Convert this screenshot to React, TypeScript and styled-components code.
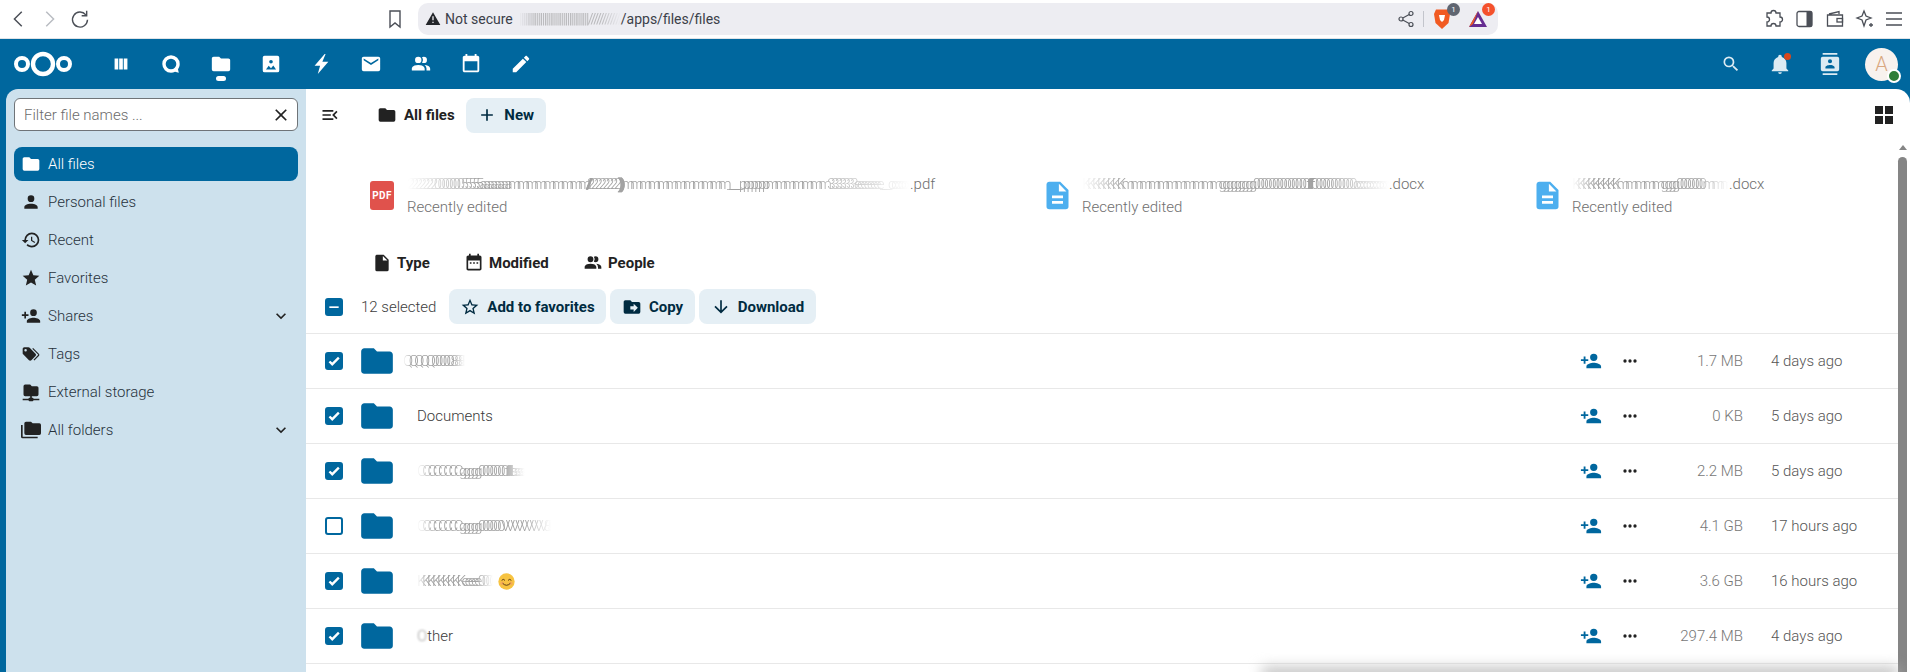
import React from 'react';
import styled, { createGlobalStyle } from 'styled-components';

const GlobalStyle = createGlobalStyle`
  html, body {
    margin: 0;
    padding: 0;
    height: 100%;
    overflow: hidden;
    background: #fff;
    font-family: Roboto, "Liberation Sans", sans-serif;
  }
  * {
    box-sizing: border-box;
  }
`;

const mdi = {
  folder: 'M10,4H4C2.89,4 2,4.89 2,6V18A2,2 0 0,0 4,20H20A2,2 0 0,0 22,18V8C22,6.89 21.1,6 20,6H12L10,4Z',
  account: 'M12,4A4,4 0 0,1 16,8A4,4 0 0,1 12,12A4,4 0 0,1 8,8A4,4 0 0,1 12,4M12,14C16.42,14 20,15.79 20,18V20H4V18C4,15.79 7.58,14 12,14Z',
  history: 'M13.5,8H12V13L16.28,15.54L17,14.33L13.5,12.25V8M13,3A9,9 0 0,0 4,12H1L4.96,16.03L9,12H6A7,7 0 0,1 13,5A7,7 0 0,1 20,12A7,7 0 0,1 13,19C11.07,19 9.32,18.21 8.06,16.94L6.64,18.36C8.27,20 10.5,21 13,21A9,9 0 0,0 22,12A9,9 0 0,0 13,3',
  star: 'M12,17.27L18.18,21L16.54,13.97L22,9.24L14.81,8.62L12,2L9.19,8.62L2,9.24L7.45,13.97L5.82,21L12,17.27Z',
  starOutline: 'M12,15.39L8.24,17.66L9.23,13.38L5.91,10.5L10.29,10.13L12,6.09L13.71,10.13L18.09,10.5L14.77,13.38L15.76,17.66M22,9.24L14.81,8.62L12,2L9.19,8.62L2,9.24L7.45,13.97L5.82,21L12,17.27L18.18,21L16.54,13.97L22,9.24Z',
  accountPlus: 'M15,14C12.33,14 7,15.33 7,18V20H23V18C23,15.33 17.67,14 15,14M6,10V7H4V10H1V12H4V15H6V12H9V10M15,12A4,4 0 0,0 19,8A4,4 0 0,0 15,4A4,4 0 0,0 11,8A4,4 0 0,0 15,12Z',
  tags: 'M5.5,9A1.5,1.5 0 0,0 7,7.5A1.5,1.5 0 0,0 5.5,6A1.5,1.5 0 0,0 4,7.5A1.5,1.5 0 0,0 5.5,9M17.41,11.58C17.77,11.94 18,12.44 18,13C18,13.55 17.78,14.05 17.41,14.41L12.41,19.41C12.05,19.77 11.55,20 11,20C10.45,20 9.95,19.78 9.58,19.41L2.59,12.42C2.22,12.05 2,11.55 2,11V6C2,4.89 2.89,4 4,4H9C9.55,4 10.05,4.22 10.41,4.58L17.41,11.58M13.54,5.71L14.54,4.71L21.41,11.58C21.78,11.94 22,12.45 22,13C22,13.55 21.78,14.05 21.42,14.41L16.04,19.79L15.04,18.79L20.75,13L13.54,5.71Z',
  folderNetwork: 'M3,15V5A2,2 0 0,1 5,3H11L13,5H19A2,2 0 0,1 21,7V15A2,2 0 0,1 19,17H13V19H14A1,1 0 0,1 15,20H22V22H15A1,1 0 0,1 14,23H10A1,1 0 0,1 9,22H2V20H9A1,1 0 0,1 10,19H11V17H5A2,2 0 0,1 3,15Z',
  folderMultiple: 'M22,4H14L12,2H6A2,2 0 0,0 4,4V16A2,2 0 0,0 6,18H22A2,2 0 0,0 24,16V6A2,2 0 0,0 22,4M2,6H0V20A2,2 0 0,0 2,22H20V20H2V6Z',
  chevronDown: 'M7.41,8.58L12,13.17L16.59,8.58L18,10L12,16L6,10L7.41,8.58Z',
  close: 'M19,6.41L17.59,5L12,10.59L6.41,5L5,6.41L10.59,12L5,17.59L6.41,19L12,13.41L17.59,19L19,17.59L13.41,12L19,6.41Z',
  plus: 'M19,13H13V19H11V13H5V11H11V5H13V11H19V13Z',
  menuOpen: 'M21,15.61L19.59,17L14.58,12L19.59,7L21,8.39L17.44,12L21,15.61M3,6H16V8H3V6M3,13V11H13V13H3M3,18V16H16V18H3Z',
  grid: 'M3,11H11V3H3M3,21H11V13H3M13,21H21V13H13M13,3V11H21V3',
  file: 'M13,9V3.5L18.5,9M6,2C4.89,2 4,2.89 4,4V20A2,2 0 0,0 6,22H18A2,2 0 0,0 20,20V8L14,2H6Z',
  calendarDots: 'M7,11H9V13H7V11M11,11H13V13H11V11M15,11H17V13H15V11M21,5V19C21,20.11 20.11,21 19,21H5C3.89,21 3,20.1 3,19V5C3,3.9 3.9,3 5,3H6V1H8V3H16V1H18V3H19C20.11,3 21,3.9 21,5M19,19V9H5V19H19Z',
  calendar: 'M21,5V19C21,20.11 20.11,21 19,21H5C3.89,21 3,20.1 3,19V5C3,3.9 3.9,3 5,3H6V1H8V3H16V1H18V3H19C20.11,3 21,3.9 21,5M19,19V9H5V19H19Z',
  accountMultiple: 'M16,17V19H2V17S2,13 9,13 16,17 16,17M12.5,7.5A3.5,3.5 0 1,0 9,11A3.5,3.5 0 0,0 12.5,7.5M15.94,13A5.32,5.32 0 0,1 18,17V19H22V17S22,13.37 15.94,13M15,4A3.39,3.39 0 0,0 13.07,4.59A5,5 0 0,1 13.07,10.41A3.39,3.39 0 0,0 15,11A3.5,3.5 0 0,0 15,4Z',
  folderMove: 'M14,18V15H10V11H14V8L19,13M20,6H12L10,4H4C2.89,4 2,4.89 2,6V18A2,2 0 0,0 4,20H20A2,2 0 0,0 22,18V8C22,6.89 21.1,6 20,6Z',
  arrowDown: 'M11,4H13V16L18.5,10.5L19.92,11.92L12,19.84L4.08,11.92L5.5,10.5L11,16V4Z',
  dots: 'M16,12A2,2 0 0,1 18,10A2,2 0 0,1 20,12A2,2 0 0,1 18,14A2,2 0 0,1 16,12M10,12A2,2 0 0,1 12,10A2,2 0 0,1 14,12A2,2 0 0,1 12,14A2,2 0 0,1 10,12M4,12A2,2 0 0,1 6,10A2,2 0 0,1 8,12A2,2 0 0,1 6,14A2,2 0 0,1 4,12Z',
  magnify: 'M9.5,3A6.5,6.5 0 0,1 16,9.5C16,11.11 15.41,12.59 14.44,13.73L14.71,14H15.5L20.5,19L19,20.5L14,15.5V14.71L13.73,14.44C12.59,15.41 11.11,16 9.5,16A6.5,6.5 0 0,1 3,9.5A6.5,6.5 0 0,1 9.5,3M9.5,5C7,5 5,7 5,9.5C5,12 7,14 9.5,14C12,14 14,12 14,9.5C14,7 12,5 9.5,5Z',
  bell: 'M21,19V20H3V19L5,17V11C5,7.9 7.03,5.17 10,4.29C10,4.19 10,4.1 10,4A2,2 0 0,1 12,2A2,2 0 0,1 14,4C14,4.1 14,4.19 14,4.29C16.97,5.17 19,7.9 19,11V17L21,19M14,21A2,2 0 0,1 12,23A2,2 0 0,1 10,21',
  contacts: 'M20,0H4V2H20V0M4,24H20V22H4V24M20,4H4A2,2 0 0,0 2,6V18A2,2 0 0,0 4,20H20A2,2 0 0,0 22,18V6A2,2 0 0,0 20,4M12,6.75A2.25,2.25 0 0,1 14.25,9A2.25,2.25 0 0,1 12,11.25A2.25,2.25 0 0,1 9.75,9A2.25,2.25 0 0,1 12,6.75M17,17H7V15.5C7,13.83 10.33,13 12,13C13.67,13 17,13.83 17,15.5V17Z',
  bolt: 'M16,1 L5,14 H11 L8.5,23 L20,9.5 H13.5 L17,1 Z',
  email: 'M20,8L12,13L4,8V6L12,11L20,6M20,4H4C2.89,4 2,4.89 2,6V18A2,2 0 0,0 4,20H20A2,2 0 0,0 22,18V6C22,4.89 21.1,4 20,4Z',
  pencil: 'M20.71,7.04C21.1,6.65 21.1,6 20.71,5.63L18.37,3.29C18,2.9 17.35,2.9 16.96,3.29L15.12,5.12L18.87,8.87M3,17.25V21H6.75L17.81,9.93L14.06,6.18L3,17.25Z',
  image: 'M5,3H19A2,2 0 0,1 21,5V19A2,2 0 0,1 19,21H5A2,2 0 0,1 3,19V5A2,2 0 0,1 5,3M12,7.5A2,2 0 1,0 12,11.5A2,2 0 1,0 12,7.5M6.5,18H17.5L14.5,13.5L12,16.5L9.5,14L6.5,18Z',
  apps: 'M5,6H9V18H5V6M10,6H14V18H10V6M15,6H19V18H15V6Z',
  talk: 'M12,2.5A9.5,9.5 0 0,0 12,21.5C13.6,21.5 15.1,21.1 16.4,20.4L20.5,21.5L19.6,17.6C20.8,16 21.5,14.1 21.5,12A9.5,9.5 0 0,0 12,2.5M12,6.2A5.8,5.8 0 1,1 12,17.8A5.8,5.8 0 1,1 12,6.2Z',
  alert: 'M13,14H11V8H13M13,18H11V16H13M1,21H23L12,2L1,21Z',
  docFile: 'M6,2C4.9,2 4,2.9 4,4V20A2,2 0 0,0 6,22H18A2,2 0 0,0 20,20V8L14,2H6M13,3.5L18.5,9H13V3.5M8,12H16V14H8V12M8,16H16V18H8V16Z',
};

const Glyph = styled.svg<{ $size?: number; $color?: string }>`
  display: block;
  flex: none;
  width: ${p => p.$size ?? 20}px;
  height: ${p => p.$size ?? 20}px;
  fill: ${p => p.$color ?? '#222'};
`;

const Icon = ({ d, size, color }: { d: string; size?: number; color?: string }) => (
  <Glyph viewBox="0 0 24 24" $size={size} $color={color}>
    <path d={d} />
  </Glyph>
);

const Page = styled.div`
  width: 1910px;
  height: 672px;
  display: flex;
  flex-direction: column;
  overflow: hidden;
  background: #00679e;
  position: relative;
`;

/* browser chrome */
const BrowserBar = styled.div`
  height: 39px;
  flex: none;
  display: flex;
  align-items: center;
  background: #fff;
  border-bottom: 1px solid #dfe3e8;
  padding-bottom: 1px;
`;

const ChromeButton = styled.div<{ $w: number; $gap?: number }>`
  width: ${p => p.$w}px;
  margin-left: ${p => p.$gap ?? 0}px;
  flex: none;
  display: flex;
  justify-content: center;
  align-items: center;
`;

const NavButtons = styled.div`
  width: 418px;
  flex: none;
  display: flex;
  padding-left: 4px;
`;

const AddressBar = styled.div`
  width: 1080px;
  height: 32px;
  flex: none;
  display: flex;
  align-items: center;
  border-radius: 10px;
  background: #ededf2;
  padding: 0 0 0 7px;
  font-size: 14px;
  color: #3b4049;
`;

const AddressText = styled.span`
  margin-left: 4px;
`;

const Smear = styled.span<{ $w: number; $color?: string }>`
  display: inline-block;
  width: ${p => p.$w}px;
  overflow: hidden;
  white-space: nowrap;
  letter-spacing: -4.5px;
  color: ${p => p.$color ?? '#555'};
  filter: blur(0.7px);
  opacity: 0.55;
  flex: none;
  mask-image: linear-gradient(90deg, transparent, #000 14%, #000 80%, transparent);
`;

const AddressSmear = styled(Smear)`
  margin-left: 6px;
  letter-spacing: -1.5px;
  opacity: 0.5;
`;

const AddressRight = styled.div`
  margin-left: auto;
  display: flex;
  align-items: center;
`;

const Divider = styled.div`
  width: 1px;
  height: 16px;
  background: #c3c5cc;
  margin: 0 9px 0 8px;
`;

const Counter = styled.span<{ $bg: string }>`
  position: absolute;
  top: -5px;
  right: -7px;
  width: 13px;
  height: 13px;
  border-radius: 50%;
  background: ${p => p.$bg};
  color: #fff;
  font-size: 8px;
  line-height: 13px;
  text-align: center;
`;

const Badge = styled.div<{ $gap?: number; $end?: number }>`
  position: relative;
  width: 20px;
  height: 22px;
  margin-left: ${p => p.$gap ?? 0}px;
  margin-right: ${p => p.$end ?? 0}px;
`;

const ToolIcons = styled.div`
  display: flex;
  margin-left: 260px;
  width: 150px;
`;

/* nextcloud header */
const Header = styled.header`
  height: 50px;
  flex: none;
  display: flex;
  align-items: center;
  background: #00679e;
`;

const Logo = styled.svg`
  width: 62px;
  height: 30px;
  margin-left: 12px;
  margin-right: 22px;
  flex: none;
`;

const AppItem = styled.div`
  width: 50px;
  height: 50px;
  flex: none;
  display: flex;
  align-items: center;
  justify-content: center;
  position: relative;
`;

const ActiveDot = styled.span`
  position: absolute;
  bottom: 8px;
  left: 50%;
  width: 10px;
  height: 5px;
  margin-left: -5px;
  border-radius: 3px;
  background: #fff;
`;

const HeaderRight = styled.div`
  margin-left: auto;
  display: flex;
  align-items: center;
  padding-right: 12px;
`;

const HeaderAction = styled.div<{ $w?: number }>`
  width: ${p => p.$w ?? 50}px;
  display: flex;
  justify-content: center;
  position: relative;
`;

const NotifyDot = styled.span`
  position: absolute;
  top: 0;
  left: 29px;
  width: 7px;
  height: 7px;
  border-radius: 50%;
  background: #d9481c;
`;

const Avatar = styled.div`
  width: 33px;
  height: 33px;
  margin-left: 10px;
  border-radius: 50%;
  background: #f8f2ee;
  color: #d9a77f;
  font-size: 20px;
  font-weight: 300;
  display: flex;
  align-items: center;
  justify-content: center;
  position: relative;
`;

const StatusDot = styled.span`
  position: absolute;
  right: -3px;
  bottom: -2px;
  width: 14px;
  height: 14px;
  border-radius: 50%;
  background: #2e7d3a;
  border: 2px solid #fff;
`;

/* body */
const Body = styled.div`
  flex: 1;
  min-height: 0;
  display: flex;
  padding-left: 6px;
`;

const Sidebar = styled.aside`
  width: 300px;
  flex: none;
  background: #cde1ed;
  border-top-left-radius: 12px;
  padding: 9px 8px 0;
`;

const Filter = styled.div`
  height: 33px;
  display: flex;
  align-items: center;
  padding: 0 6px 0 9px;
  background: #fff;
  border: 1px solid #6f7478;
  border-radius: 6px;
  margin-bottom: 16px;
  color: #6b6b6b;
  font-size: 15px;
  font-weight: 300;
  justify-content: space-between;
`;

const NavList = styled.nav`
  display: flex;
  flex-direction: column;
  gap: 4px;
`;

const NavRow = styled.div<{ $active?: boolean }>`
  height: 34px;
  display: flex;
  align-items: center;
  padding: 0 7px 0 7px;
  gap: 7px;
  border-radius: 8px;
  font-size: 15px;
  font-weight: 300;
  background: ${p => (p.$active ? '#00679e' : 'transparent')};
  color: ${p => (p.$active ? '#fff' : '#27323c')};
`;

const NavLabel = styled.span`
  flex: 1;
`;

const Main = styled.main`
  flex: 1;
  min-width: 0;
  display: flex;
  background: #fff;
  border-top-right-radius: 14px;
`;

const Content = styled.div`
  flex: 1;
  min-width: 0;
`;

const Toolbar = styled.div`
  height: 52px;
  display: flex;
  align-items: center;
  padding: 0 0 0 14px;
  font-size: 15px;
  font-weight: 700;
  color: #222;
`;

const Crumb = styled.div`
  display: flex;
  align-items: center;
  gap: 7px;
  margin-left: 37px;
  margin-right: 11px;
`;

const SoftButton = styled.div<{ $w: number }>`
  width: ${p => p.$w}px;
  height: 35px;
  display: flex;
  align-items: center;
  justify-content: center;
  gap: 7px;
  border-radius: 8px;
  background: #e5eff5;
  color: #002b41;
  font-size: 15px;
  font-weight: 700;
  flex: none;
`;

const GridToggle = styled.div`
  margin-left: auto;
  margin-right: 2px;
`;

const RecentRow = styled.div`
  height: 100px;
  padding: 38px 0 0 64px;
  display: flex;
`;

const RecentCard = styled.div<{ $w: number }>`
  width: ${p => p.$w}px;
  flex: none;
  display: flex;
  align-items: center;
  height: 26px;
  gap: 13px;
`;

const PdfBadge = styled.div`
  width: 24px;
  height: 29px;
  margin-top: 6px;
  border-radius: 3px;
  background: #e0524c;
  color: #fff;
  font-size: 10px;
  font-weight: 700;
  letter-spacing: 0.4px;
  display: flex;
  align-items: center;
  justify-content: center;
  flex: none;
`;

const DocIcon = styled.div`
  margin: 6px -5.5px 0 -5.5px;
  padding-right: 1px;
`;

const RecentText = styled.div`
  display: flex;
  flex-direction: column;
  gap: 5px;
  font-size: 15px;
  font-weight: 300;
  color: #6f6f6f;
  line-height: 18px;
  margin-top: 6px;
`;

const RecentName = styled.div`
  display: flex;
`;

const FilterChips = styled.div`
  height: 34px;
  margin-top: 5px;
  padding-left: 66px;
  display: flex;
  align-items: center;
  font-size: 15px;
  font-weight: 700;
  color: #222;
`;

const Chip = styled.div<{ $w: number }>`
  width: ${p => p.$w}px;
  display: flex;
  align-items: center;
  gap: 5px;
  flex: none;
`;

const SelectionBar = styled.div`
  height: 35px;
  margin-top: 9px;
  margin-bottom: 9px;
  padding-left: 19px;
  display: flex;
  align-items: center;
  gap: 4px;
`;

const SelectedCount = styled.span`
  width: 98px;
  padding-left: 14px;
  flex: none;
  font-size: 15px;
  font-weight: 300;
  color: #3d3d3d;
`;

const Box = styled.div<{ $on?: boolean }>`
  width: 18px;
  height: 18px;
  flex: none;
  border-radius: 3px;
  border: 2px solid #00679e;
  background: ${p => (p.$on ? '#00679e' : '#fff')};
  display: flex;
  align-items: center;
  justify-content: center;
  color: #fff;
`;

const Table = styled.div`
  border-top: 1px solid #e8e8e8;
`;

const Row = styled.div`
  height: 55px;
  display: flex;
  align-items: center;
  padding-left: 19px;
  border-bottom: 1px solid #e8e8e8;
  font-size: 15px;
  font-weight: 300;
`;

const FolderWrap = styled.div`
  width: 32px;
  margin-left: 18px;
  margin-right: 24px;
  display: flex;
  justify-content: center;
  flex: none;
`;

const FolderIcon = styled.div`
  margin: 0 -3px;
`;

const Name = styled.div<{ $shift?: number }>`
  flex: 1;
  min-width: 0;
  display: flex;
  align-items: center;
  gap: 5px;
  color: #3a3a3a;
  margin-left: ${p => p.$shift ?? 0}px;
`;

const Ghost = styled.span`
  filter: blur(0.8px);
  opacity: 0.5;
`;

const Emoji = styled.svg`
  width: 17px;
  height: 17px;
  flex: none;
`;

const ActionCell = styled.div<{ $w?: number }>`
  width: ${p => p.$w ?? 40}px;
  display: flex;
  justify-content: center;
  flex: none;
`;

const SizeCell = styled.div`
  width: 93px;
  text-align: right;
  color: #777;
  flex: none;
`;

const DateCell = styled.div`
  width: 127px;
  margin-left: 28px;
  color: #555;
  flex: none;
`;

const Scrollbar = styled.div`
  width: 9px;
  flex: none;
  margin-right: 3px;
  padding-top: 56px;
  display: flex;
  flex-direction: column;
  align-items: center;
  gap: 7px;
`;

const ScrollArrow = styled.div`
  width: 0;
  height: 0;
  border-left: 4.5px solid transparent;
  border-right: 4.5px solid transparent;
  border-bottom: 5px solid #858585;
`;

const ScrollThumb = styled.div`
  width: 9px;
  flex: 1;
  background: #858585;
  border-radius: 5px 5px 0 0;
`;

const BottomShadow = styled.div`
  position: absolute;
  left: 1262px;
  right: 12px;
  bottom: -8px;
  height: 12px;
  background: #b9b9b9;
  filter: blur(7px);
  pointer-events: none;
`;

const rows = [
  { text: 'QQQQQ000008888ggggccceeeeee', w: 62, shift: -14, size: '1.7 MB', date: '4 days ago', on: true },
  { name: 'Documents', size: '0 KB', date: '5 days ago', on: true },
  { text: 'CCCCCCCCggggg0000000ffffffffttttttsssssssss', w: 108, size: '2.2 MB', date: '5 days ago', on: true },
  { text: 'CCCCCCCCggggg000000VVVVVVVVV88888888qqqqqqqq0000', w: 134, size: '4.1 GB', date: '17 hours ago', on: false },
  { text: 'KKKKKKKKKeeeee00000000000rrrr', w: 76, emoji: true, size: '3.6 GB', date: '16 hours ago', on: true },
  { other: true, size: '297.4 MB', date: '4 days ago', on: true },
];

const appIcons = [
  mdi.apps, mdi.talk, mdi.folder, mdi.image, mdi.bolt, mdi.email, mdi.accountMultiple, mdi.calendar, mdi.pencil,
];

const navItems = [
  { label: 'All files', d: mdi.folder, active: true },
  { label: 'Personal files', d: mdi.account },
  { label: 'Recent', d: mdi.history },
  { label: 'Favorites', d: mdi.star },
  { label: 'Shares', d: mdi.accountPlus, more: true },
  { label: 'Tags', d: mdi.tags },
  { label: 'External storage', d: mdi.folderNetwork },
  { label: 'All folders', d: mdi.folderMultiple, more: true },
];

const Smiley = () => (
  <Emoji viewBox="0 0 24 24">
    <circle cx="12" cy="12" r="11.5" fill="#f7c341" />
    <circle cx="6" cy="14.5" r="2.6" fill="#f4a261" opacity="0.7" />
    <circle cx="18" cy="14.5" r="2.6" fill="#f4a261" opacity="0.7" />
    <path d="M5.5 10 Q7.5 7.5 9.5 10 M14.5 10 Q16.5 7.5 18.5 10 M7 15 Q12 20 17 15" fill="none" stroke="#5a3b12" strokeWidth="1.4" strokeLinecap="round" />
  </Emoji>
);

const Chrome = () => (
  <BrowserBar>
    <NavButtons>
      <ChromeButton $w={30}>
        <svg width="22" height="22" viewBox="0 0 24 24" fill="none" stroke="#4b4f57" strokeWidth="1.6"><path d="M15 4 L7 12 L15 20" /></svg>
      </ChromeButton>
      <ChromeButton $w={30}>
        <svg width="22" height="22" viewBox="0 0 24 24" fill="none" stroke="#b9bcc2" strokeWidth="1.6"><path d="M9 4 L17 12 L9 20" /></svg>
      </ChromeButton>
      <ChromeButton $w={32}>
        <svg width="20" height="20" viewBox="0 0 24 24" fill="none" stroke="#4b4f57" strokeWidth="1.7"><path d="M19 7 A9 9 0 1 0 21 13" /><path d="M20 2 V8 H14" /></svg>
      </ChromeButton>
      <ChromeButton $w={30} $gap={284}>
        <svg width="20" height="22" viewBox="0 0 20 22" fill="none" stroke="#4b4f57" strokeWidth="1.4"><path d="M5 3 H15 V19 L10 15 L5 19 Z" /></svg>
      </ChromeButton>
    </NavButtons>
    <AddressBar>
      <Icon d={mdi.alert} size={16} color="#24262b" />
      <AddressText>Not secure</AddressText>
      <AddressSmear $w={102} $color="#888">||||||||||||||||||||||||||||||||||||///////////////////////</AddressSmear>
      <span>/apps/files/files</span>
      <AddressRight>
        <svg width="18" height="18" viewBox="0 0 18 18" fill="none" stroke="#4b4f57" strokeWidth="1.2"><circle cx="4" cy="9" r="2" /><circle cx="14" cy="3.5" r="2" /><circle cx="14" cy="14.5" r="2" /><path d="M5.8 8 L12.2 4.5 M5.8 10 L12.2 13.5" /></svg>
        <Divider />
        <Badge>
          <svg width="18" height="22" viewBox="0 0 18 22"><path d="M3 1.5 H15 L17 6 L15.5 15 L9 21 L2.5 15 L1 6 Z" fill="#f15a22" /><path d="M6 7 H12 L11 12 L9 14 L7 12 Z" fill="#fff" /></svg>
          <Counter $bg="#5f6571">1</Counter>
        </Badge>
        <Badge $gap={15} $end={10}>
          <svg width="20" height="22" viewBox="0 0 20 22"><path d="M10 3 L19 19 H1 Z" fill="#662d91" /><path d="M10 3 L1 19 L5 16 Z" fill="#f15a22" /><path d="M10 9 L14 16 H6 Z" fill="#fff" /></svg>
          <Counter $bg="#f4512c">1</Counter>
        </Badge>
      </AddressRight>
    </AddressBar>
    <ToolIcons>
      <ChromeButton $w={32}>
        <svg width="20" height="20" viewBox="0 0 20 20" fill="none" stroke="#4b4f57" strokeWidth="1.3"><path d="M7 4 a2.5 2.5 0 0 1 5 0 h4 v4 a2.5 2.5 0 0 1 0 5 v4 h-4 a2.5 2.5 0 0 0 -5 0 h-4 v-4 a2.5 2.5 0 0 0 0 -5 v-4 Z" /></svg>
      </ChromeButton>
      <ChromeButton $w={30}>
        <svg width="18" height="18" viewBox="0 0 18 18"><rect x="1" y="1.5" width="15" height="15" rx="2" fill="none" stroke="#4b4f57" strokeWidth="1.3" /><rect x="10.5" y="1.5" width="5.5" height="15" fill="#4b4f57" /></svg>
      </ChromeButton>
      <ChromeButton $w={30}>
        <svg width="18" height="18" viewBox="0 0 18 18" fill="none" stroke="#4b4f57" strokeWidth="1.3"><path d="M3 4 L13 1.5 V4 M1.5 5 H16.5 V16 H1.5 Z" /><rect x="11" y="8.5" width="5.5" height="3.5" /></svg>
      </ChromeButton>
      <ChromeButton $w={29}>
        <svg width="20" height="20" viewBox="0 0 20 20" fill="none" stroke="#4b4f57" strokeWidth="1.3"><path d="M9 2 L11 7 L16 9 L11 11 L9 17 L7 11 L2 9 L7 7 Z" /><path d="M16 14 V18 M14 16 H18" /></svg>
      </ChromeButton>
      <ChromeButton $w={29}>
        <svg width="18" height="16" viewBox="0 0 18 16" stroke="#4b4f57" strokeWidth="1.3"><path d="M1 2 H17 M1 8 H17 M1 14 H17" /></svg>
      </ChromeButton>
    </ToolIcons>
  </BrowserBar>
);

const App = () => (
  <Page>
    <GlobalStyle />
    <Chrome />
    <Header>
      <Logo viewBox="0 0 62 30" fill="none" stroke="#fff">
        <circle cx="10" cy="15" r="6" strokeWidth="4" />
        <circle cx="31" cy="15" r="10" strokeWidth="4.4" />
        <circle cx="52" cy="15" r="6" strokeWidth="4" />
      </Logo>
      {appIcons.map((d, i) => (
        <AppItem key={i}>
          <Icon d={d} size={22} color="#fff" />
          {i === 2 && <ActiveDot />}
        </AppItem>
      ))}
      <HeaderRight>
        <HeaderAction $w={48}>
          <Icon d={mdi.magnify} size={20} color="#dcebf3" />
        </HeaderAction>
        <HeaderAction>
          <Icon d={mdi.bell} size={22} color="#dcebf3" />
          <NotifyDot />
        </HeaderAction>
        <HeaderAction>
          <Icon d={mdi.contacts} size={22} color="#dcebf3" />
        </HeaderAction>
        <Avatar>
          A
          <StatusDot />
        </Avatar>
      </HeaderRight>
    </Header>
    <Body>
      <Sidebar>
        <Filter>
          Filter file names ...
          <Icon d={mdi.close} size={20} color="#222" />
        </Filter>
        <NavList>
          {navItems.map(item => (
            <NavRow key={item.label} $active={item.active}>
              <Icon d={item.d} size={20} color={item.active ? '#fff' : '#222'} />
              <NavLabel>{item.label}</NavLabel>
              {item.more && <Icon d={mdi.chevronDown} size={20} color="#222" />}
            </NavRow>
          ))}
        </NavList>
      </Sidebar>
      <Main>
        <Content>
          <Toolbar>
            <Icon d={mdi.menuOpen} size={20} color="#222" />
            <Crumb>
              <Icon d={mdi.folder} size={20} color="#222" />
              All files
            </Crumb>
            <SoftButton $w={80}>
              <Icon d={mdi.plus} size={20} color="#002b41" />
              New
            </SoftButton>
            <GridToggle>
              <Icon d={mdi.grid} size={24} color="#222" />
            </GridToggle>
          </Toolbar>
          <RecentRow>
            <RecentCard $w={676}>
              <PdfBadge>PDF</PdfBadge>
              <RecentText>
                <RecentName>
                  <Smear $w={503}>2222222000000055555aaaaaaaammmmmmmmm//////////22222222))))))))))mmmmmmmmmmmm______pppppppmmmmmmm3333333eeeeeeee____ccccccoooooommmmmmmeeeeeeeeeeeeerrrrrrrrrrrrmmmmmmmmmmmmmmmmmmmmmmmmmmmm</Smear>
                  <span>.pdf</span>
                </RecentName>
                Recently edited
              </RecentText>
            </RecentCard>
            <RecentCard $w={490}>
              <DocIcon>
                <Icon d={mdi.docFile} size={33} color="#4dafef" />
              </DocIcon>
              <RecentText>
                <RecentName>
                  <Smear $w={307}>KKKKKKKKmmmmmmmmmmmggggggggg00000000000000ffffffffff00000000000ccccccccccccc0000000ccccccccccoooooo00000000000000000000000</Smear>
                  <span>.docx</span>
                </RecentName>
                Recently edited
              </RecentText>
            </RecentCard>
            <RecentCard $w={300}>
              <DocIcon>
                <Icon d={mdi.docFile} size={33} color="#4dafef" />
              </DocIcon>
              <RecentText>
                <RecentName>
                  <Smear $w={157}>KKKKKKKKKmmmmmgggg0000000mmmmmmmmmmmttttttttttttttttttttttttt</Smear>
                  <span>.docx</span>
                </RecentName>
                Recently edited
              </RecentText>
            </RecentCard>
          </RecentRow>
          <FilterChips>
            <Chip $w={92}>
              <Icon d={mdi.file} size={20} color="#222" />
              Type
            </Chip>
            <Chip $w={119}>
              <Icon d={mdi.calendarDots} size={20} color="#222" />
              Modified
            </Chip>
            <Chip $w={100}>
              <Icon d={mdi.accountMultiple} size={20} color="#222" />
              People
            </Chip>
          </FilterChips>
          <SelectionBar>
            <Box $on>
              <Icon d="M5 11 H19 V13.5 H5 Z" size={16} color="#fff" />
            </Box>
            <SelectedCount>12 selected</SelectedCount>
            <SoftButton $w={157}>
              <Icon d={mdi.starOutline} size={20} color="#002b41" />
              Add to favorites
            </SoftButton>
            <SoftButton $w={85}>
              <Icon d={mdi.folderMove} size={20} color="#002b41" />
              Copy
            </SoftButton>
            <SoftButton $w={117}>
              <Icon d={mdi.arrowDown} size={20} color="#002b41" />
              Download
            </SoftButton>
          </SelectionBar>
          <Table>
            {rows.map((row, i) => (
              <Row key={i}>
                <Box $on={row.on}>
                  {row.on && <Icon d="M9,20.42L2.79,14.21L5.62,11.38L9,14.77L18.88,4.88L21.71,7.71L9,20.42Z" size={14} color="#fff" />}
                </Box>
                <FolderWrap>
                  <FolderIcon>
                    <Icon d={mdi.folder} size={38} color="#00679e" />
                  </FolderIcon>
                </FolderWrap>
                <Name $shift={row.shift}>
                  {row.name}
                  {row.text && <Smear $w={row.w ?? 0}>{row.text}</Smear>}
                  {row.emoji && <Smiley />}
                  {row.other && (
                    <span>
                      <Ghost>O</Ghost>ther
                    </span>
                  )}
                </Name>
                <ActionCell $w={39}>
                  <Icon d={mdi.accountPlus} size={22} color="#00679e" />
                </ActionCell>
                <ActionCell>
                  <Icon d={mdi.dots} size={20} color="#222" />
                </ActionCell>
                <SizeCell>{row.size}</SizeCell>
                <DateCell>{row.date}</DateCell>
              </Row>
            ))}
          </Table>
        </Content>
        <Scrollbar>
          <ScrollArrow />
          <ScrollThumb />
        </Scrollbar>
      </Main>
    </Body>
    <BottomShadow />
  </Page>
);

export default App;
